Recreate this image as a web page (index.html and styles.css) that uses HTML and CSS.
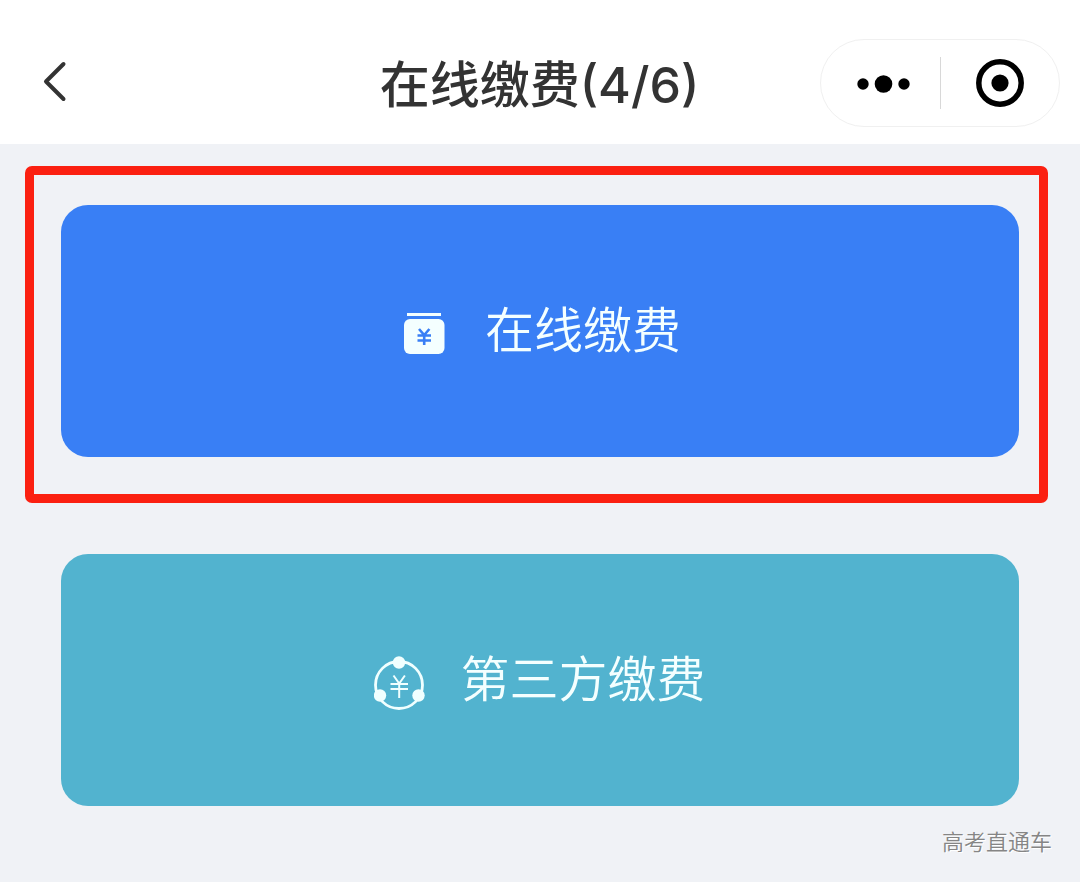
FILE: index.html
```html
<!DOCTYPE html>
<html lang="zh-CN">
<head>
<meta charset="utf-8">
<meta name="viewport" content="width=device-width, initial-scale=1">
<title>在线缴费</title>
<link rel="stylesheet" href="styles.css">
</head>
<body>
<header class="navbar">
  <button class="back" type="button" aria-label="返回">
    <svg width="24" height="44" viewBox="0 0 24 44" fill="none" stroke="#333" stroke-width="4" stroke-linecap="round" stroke-linejoin="round"><path d="M20.500 3 3 20.500 20.500 38"/></svg>
  </button>
  <h1 class="title">在线缴费(4/6)</h1>
  <div class="capsule">
    <button class="capsule-button" type="button" aria-label="更多">
      <svg width="60" height="20" viewBox="0 0 60 20"><circle cx="12" cy="11" r="5.700"/><circle cx="32.500" cy="11" r="8.800"/><circle cx="53" cy="11" r="5.700"/></svg>
    </button>
    <button class="capsule-button" type="button" aria-label="关闭">
      <svg width="48" height="48" viewBox="0 0 48 48"><circle cx="24" cy="24" r="21.200" fill="none" stroke="#000" stroke-width="5.500"/><circle cx="24" cy="24" r="8.600"/></svg>
    </button>
  </div>
</header>
<main class="content">
  <div class="option option-marked">
    <button class="card card-online" type="button">
      <svg class="card-icon" width="52" height="60" viewBox="0 0 52 60" fill="none">
        <path d="M8 13.500H42" stroke="#f4ffff" stroke-width="3"/>
        <rect x="5" y="18" width="40.500" height="35" rx="6" fill="#f4ffff"/>
        <path d="M20 28l5.200 6 5.200-6M18.500 34.500h13.500M18.500 39.500h13.500M25.200 34v10" stroke="#397ff5" stroke-width="2.600"/>
      </svg>
      <span>在线缴费</span>
    </button>
  </div>
  <div class="option">
    <button class="card card-third" type="button">
      <svg class="card-icon" width="52" height="60" viewBox="0 0 52 60" fill="none" stroke="#f0ffff">
        <circle cx="25" cy="35" r="23.500" stroke-width="2.800"/>
        <g fill="#f0ffff" stroke="none"><circle cx="25" cy="12.500" r="6.200"/><circle cx="6" cy="45.500" r="6.200"/><circle cx="44.500" cy="45.500" r="6.200"/></g>
        <path d="M19.500 25.500l5.700 8 5.700-8M16.500 34h17.500M16.500 39h17.500M25.200 33.500v14.500" stroke-width="2"/>
      </svg>
      <span>第三方缴费</span>
    </button>
  </div>
  <p class="signature">高考直通车</p>
</main>
</body>
</html>
```
FILE: styles.css
```css
* {
  box-sizing: border-box;
}

body {
  margin: 0;
  min-height: 100vh;
  display: flex;
  flex-direction: column;
  background: #f0f2f6;
  font-family: Inter, "Noto Sans CJK SC", sans-serif;
}

button {
  margin: 0;
  padding: 0;
  border: 0;
  background: none;
  font: inherit;
  cursor: pointer;
}

svg {
  display: block;
}

.navbar {
  display: grid;
  grid-template-columns: 1fr auto 1fr;
  align-items: center;
  padding: 39px 20px 17px 43px;
  background: #fff;
}

.back {
  justify-self: start;
}

.title {
  margin: 0 24px 0 0;
  padding-top: 4px;
  color: #333;
  font-size: 50px;
  font-weight: 500;
  line-height: 84px;
  white-space: nowrap;
}

.capsule {
  justify-self: end;
  display: flex;
  width: 240px;
  height: 88px;
  border: 1px solid #f0f0f0;
  border-radius: 44px;
}

.capsule-button {
  flex: 1;
  display: flex;
  align-items: center;
  justify-content: center;
  position: relative;
}

.capsule-button + .capsule-button::before {
  content: "";
  position: absolute;
  left: 0;
  top: 17px;
  bottom: 17px;
  width: 1px;
  background: #d8d8d8;
}

.content {
  flex: 1;
  display: flex;
  flex-direction: column;
  gap: 97px;
  padding: 61px 61px 24px;
}

.option {
  position: relative;
}

/* Highlight frame around the recommended option */
.option-marked::after {
  content: "";
  position: absolute;
  inset: -39px -29px -46px -36px;
  border: 9px solid #fb2011;
  border-radius: 7px;
  pointer-events: none;
}

.card {
  display: flex;
  align-items: center;
  justify-content: center;
  gap: 34px;
  width: 100%;
  min-height: 252px;
  border-radius: 27px;
  color: #f4ffff;
  font-size: 49px;
  font-weight: 350;
  line-height: 72px;
}

.card-online {
  background: #397ff5;
}

.card-third {
  background: #52b3cf;
}

.signature {
  margin: -75px -33px 0 0;
  align-self: flex-end;
  color: #858585;
  font-size: 22px;
  font-weight: 350;
  line-height: 28px;
  text-shadow: 1px 1px 0 #fff;
}
```
